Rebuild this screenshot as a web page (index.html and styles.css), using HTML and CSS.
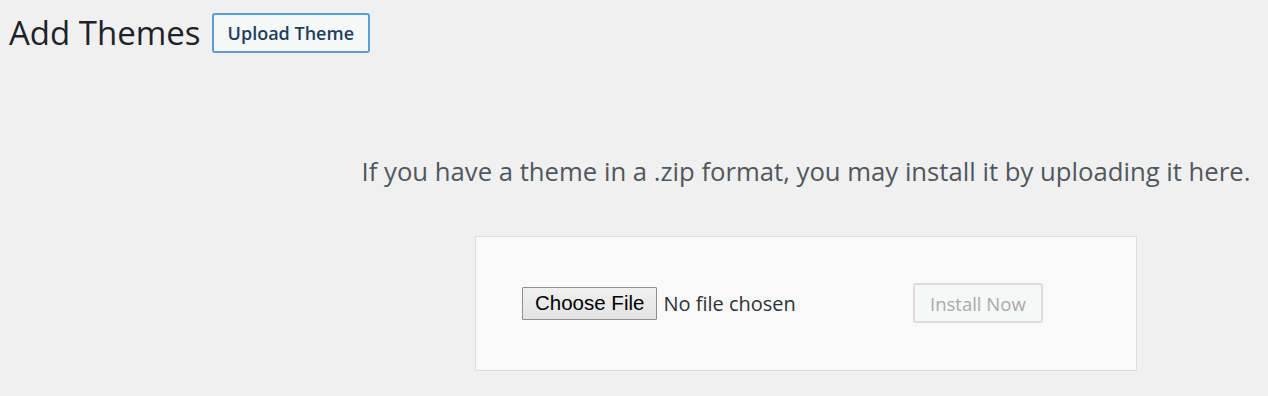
FILE: index.html
```html
<!DOCTYPE html>
<html lang="en">
<head>
    <meta charset="UTF-8">
    <meta name="viewport" content="width=device-width, initial-scale=1.0">
    <title>Add Themes</title>
    <link rel="stylesheet" href="styles.css">
</head>
<body>
    <div class="wrap">
        <div class="page-head">
            <h1>Add Themes</h1>
            <button class="upload-toggle">Upload Theme</button>
        </div>

        <div class="upload-theme">
            <p class="install-help">If you have a theme in a .zip format, you may install it by uploading it here.</p>
            <form class="upload-form">
                <div class="file-field">
                    <button type="button" class="choose-file">Choose File</button>
                    <span class="file-name">No file chosen</span>
                </div>
                <button type="submit" class="install-btn" disabled>Install Now</button>
            </form>
        </div>
    </div>
</body>
</html>
```

FILE: styles.css
```css
body {
    margin: 0;
    background: #f0f0f1;
    font-family: 'Open Sans', 'Noto Sans', sans-serif;
    color: #1d2327;
}

.wrap {
    padding: 13px 0 0 9px;
}

.page-head {
    display: flex;
    align-items: center;
    gap: 11px;
}

h1 {
    margin: 0;
    font-size: 33px;
    font-weight: 400;
    color: #1d2327;
    line-height: 40px;
}

.upload-toggle {
    height: 40px;
    padding: 0 14px;
    background: #f6f7f7;
    border: 2px solid #5b9dd9;
    border-radius: 3px;
    font-family: inherit;
    font-size: 18px;
    font-weight: 600;
    color: #1d3f5e;
}

.upload-theme {
    margin-left: 335px;
    display: flex;
    flex-direction: column;
    align-items: center;
}

.install-help {
    margin: 102px 0 0;
    font-size: 25.7px;
    line-height: 34px;
    color: #50575e;
}

.upload-form {
    margin-top: 47px;
    width: 662px;
    box-sizing: border-box;
    padding: 46px 46px 47px;
    background: #f9f9f9;
    border: 1px solid #dcdcde;
    display: flex;
    align-items: center;
}

.file-field {
    width: 391px;
    display: flex;
    align-items: center;
    gap: 6px;
}

.choose-file {
    height: 33px;
    padding: 0 12px;
    font-family: 'Liberation Sans', Arial, sans-serif;
    font-size: 20.5px;
    color: #000;
    background: linear-gradient(#f0f0f0, #e3e3e3);
    border: 1px solid #8f8f8f;
    border-radius: 1px;
}

.file-name {
    font-size: 20px;
    color: #2c3338;
}

.install-btn {
    height: 40px;
    padding: 0 15px;
    font-family: inherit;
    font-size: 18.5px;
    color: #a7aaad;
    background: #f6f7f7;
    border: 2px solid #dcdcde;
    border-radius: 3px;
}
```
